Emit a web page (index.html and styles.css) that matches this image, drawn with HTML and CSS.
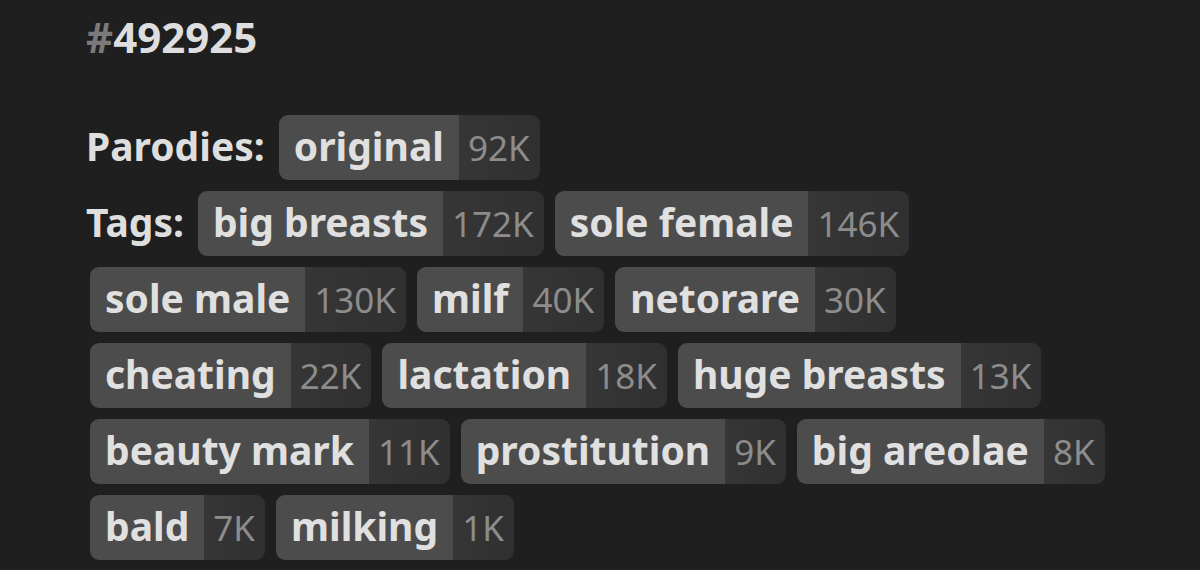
FILE: index.html
```html
<!DOCTYPE html>
<html lang="en">
<head>
    <meta charset="UTF-8">
    <meta name="viewport" content="width=device-width, initial-scale=1.0">
    <title>#492925</title>
    <link rel="stylesheet" href="styles.css">
</head>
<body>
    <div class="info">
        <h3 class="gallery-id"><span class="hash">#</span>492925</h3>

        <section class="tag-list">
            <div class="tag-container">
                <span class="label">Parodies:</span>
                <a href="#" class="tag"><span class="name">original</span><span class="count">92K</span></a>
            </div>

            <div class="tag-container">
                <span class="label">Tags:</span>
                <a href="#" class="tag"><span class="name">big breasts</span><span class="count">172K</span></a>
                <a href="#" class="tag"><span class="name">sole female</span><span class="count">146K</span></a>
                <a href="#" class="tag"><span class="name">sole male</span><span class="count">130K</span></a>
                <a href="#" class="tag"><span class="name">milf</span><span class="count">40K</span></a>
                <a href="#" class="tag"><span class="name">netorare</span><span class="count">30K</span></a>
                <a href="#" class="tag"><span class="name">cheating</span><span class="count">22K</span></a>
                <a href="#" class="tag"><span class="name">lactation</span><span class="count">18K</span></a>
                <a href="#" class="tag"><span class="name">huge breasts</span><span class="count">13K</span></a>
                <a href="#" class="tag"><span class="name">beauty mark</span><span class="count">11K</span></a>
                <a href="#" class="tag"><span class="name">prostitution</span><span class="count">9K</span></a>
                <a href="#" class="tag"><span class="name">big areolae</span><span class="count">8K</span></a>
                <a href="#" class="tag"><span class="name">bald</span><span class="count">7K</span></a>
                <a href="#" class="tag"><span class="name">milking</span><span class="count">1K</span></a>
            </div>
        </section>
    </div>
</body>
</html>
```

FILE: styles.css
```css
* { margin: 0; padding: 0; box-sizing: border-box; }

body {
    font-family: "Noto Sans", "Open Sans", sans-serif;
    background: #1f1f1f;
    color: #d9d9d9;
    overflow: hidden;
}

.info {
    padding: 12px 0 0 86px;
}

.gallery-id {
    font-size: 42px;
    font-weight: 700;
    line-height: 50px;
    color: #dedede;
}

.gallery-id .hash {
    color: #7a7a7a;
}

.tag-list {
    margin-top: 53px;
    display: flex;
    flex-direction: column;
    gap: 11px;
}

.tag-container {
    display: flex;
    flex-wrap: wrap;
    align-items: baseline;
    row-gap: 11px;
    column-gap: 7px;
    max-width: 1064px;
}

.label {
    font-size: 39px;
    font-weight: 700;
    line-height: 40px;
    color: #dedede;
    margin-right: 3px;
}

/* tag pill: bold name + dimmed count */
.tag {
    display: inline-flex;
    align-items: flex-start;
    height: 65px;
    margin-left: 4px;
    border-radius: 9px;
    overflow: hidden;
    text-decoration: none;
}

.tag .name {
    background: #4c4c4c;
    color: #e0e0e0;
    font-size: 39px;
    font-weight: 700;
    line-height: 61px;
    padding: 0 15px 4px;
}

.tag .count {
    background: linear-gradient(90deg, #363636, #303030);
    color: #8c8c8c;
    font-size: 35px;
    font-weight: 400;
    line-height: 65px;
    padding: 0 10px 0 9px;
}
```
